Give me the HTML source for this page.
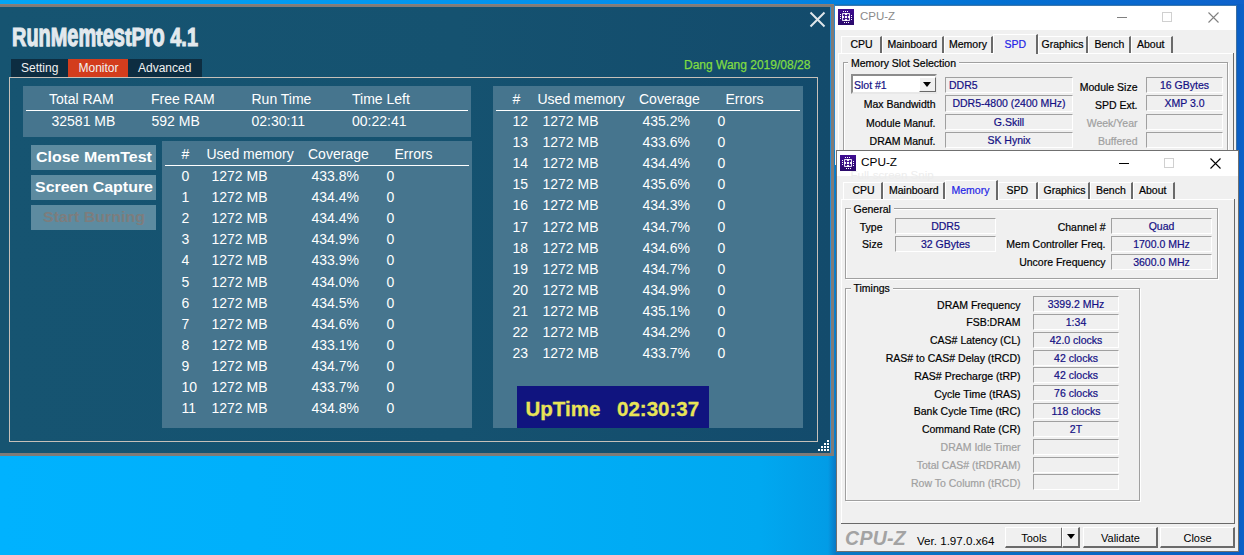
<!DOCTYPE html>
<html><head><meta charset="utf-8"><title>RunMemtestPro</title>
<style>
html,body{margin:0;padding:0;}
body{width:1244px;height:555px;overflow:hidden;position:relative;font-family:"Liberation Sans",sans-serif;
background:linear-gradient(to right,#00b2fe 0px,#00aef8 500px,#00a8f0 760px,#029ce6 828px,#0a78c4 836px,#0a5ec4 1238px,#0a62c8 1244px);}
.t{position:absolute;white-space:pre;}
.r{position:absolute;}
.cz{-webkit-text-stroke:0.2px currentColor;}
</style></head><body>
<div class="r" style="left:0px;top:0px;width:1244px;height:4px;background:linear-gradient(to right,#02a5f5 0px,#028cea 700px,#0370d2 1000px,#0e62cb 1244px);"></div>
<div class="r" style="left:0px;top:4px;width:834px;height:452px;background:#7f7b78;"></div>
<div class="r" style="left:0px;top:4px;width:834px;height:1px;background:#8a7f7a;"></div>
<div class="r" style="left:0px;top:7px;width:830px;height:446px;background:linear-gradient(to right,#165471 0%,#155270 55%,#134b6c 100%);"></div>
<div class="r" style="left:830px;top:7px;width:1px;height:446px;background:#1d8fe0;"></div>
<div class="t" style="left:12px;top:23.59px;font-size:26px;line-height:26px;color:#e3e9ee;font-weight:700;font-style:normal;transform:scaleX(0.766);transform-origin:0 0;-webkit-text-stroke:1.1px #e3e9ee;">R<span style="display:inline-block;transform:scaleY(1.18);transform-origin:0 22px">un</span>M<span style="display:inline-block;transform:scaleY(1.18);transform-origin:0 22px">em</span>t<span style="display:inline-block;transform:scaleY(1.18);transform-origin:0 22px">es</span>tP<span style="display:inline-block;transform:scaleY(1.18);transform-origin:0 22px">ro</span> 4.1</div>
<div class="r" style="left:11px;top:59px;width:191px;height:18px;background:#0d2d41;"></div>
<div class="r" style="left:68px;top:59px;width:60px;height:18px;background:#d33d1d;"></div>
<div class="t" style="left:21px;top:61.84px;font-size:12px;line-height:12px;color:#f2f2f2;font-weight:400;font-style:normal;">Setting</div>
<div class="t" style="left:78.5px;top:61.84px;font-size:12px;line-height:12px;color:#f2f2f2;font-weight:400;font-style:normal;">Monitor</div>
<div class="t" style="left:138px;top:61.84px;font-size:12px;line-height:12px;color:#f2f2f2;font-weight:400;font-style:normal;">Advanced</div>
<div class="t" style="left:684px;top:58.54px;font-size:12px;line-height:12px;color:#80dc42;font-weight:400;font-style:normal;-webkit-text-stroke:0.25px #80dc42;">Dang Wang 2019/08/28</div>
<svg class="r" style="left:808px;top:10px" width="19" height="19" viewBox="0 0 19 19"><path d="M2.5 2.5L16.5 16.5M16.5 2.5L2.5 16.5" stroke="#dfe5ea" stroke-width="2"/></svg>
<div class="r" style="left:9px;top:77px;width:809px;height:365px;background:transparent;box-sizing:border-box;border:1px solid #c6c0b9;"></div>
<div class="r" style="left:23px;top:86px;width:448px;height:51px;background:#46758e;"></div>
<div class="r" style="left:26px;top:110px;width:442px;height:1px;background:#ffffff;"></div>
<div class="t" style="left:49px;top:92.15px;font-size:14px;line-height:14px;color:#ffffff;font-weight:400;font-style:normal;">Total RAM</div>
<div class="t" style="left:151px;top:92.15px;font-size:14px;line-height:14px;color:#ffffff;font-weight:400;font-style:normal;">Free RAM</div>
<div class="t" style="left:251.5px;top:92.15px;font-size:14px;line-height:14px;color:#ffffff;font-weight:400;font-style:normal;">Run Time</div>
<div class="t" style="left:352px;top:92.15px;font-size:14px;line-height:14px;color:#ffffff;font-weight:400;font-style:normal;">Time Left</div>
<div class="t" style="left:51.5px;top:114.15px;font-size:14px;line-height:14px;color:#ffffff;font-weight:400;font-style:normal;">32581 MB</div>
<div class="t" style="left:151.5px;top:114.15px;font-size:14px;line-height:14px;color:#ffffff;font-weight:400;font-style:normal;">592 MB</div>
<div class="t" style="left:251.5px;top:114.15px;font-size:14px;line-height:14px;color:#ffffff;font-weight:400;font-style:normal;">02:30:11</div>
<div class="t" style="left:352px;top:114.15px;font-size:14px;line-height:14px;color:#ffffff;font-weight:400;font-style:normal;">00:22:41</div>
<div class="r" style="left:31px;top:145px;width:125px;height:25px;background:#5d8ba0;"></div>
<div class="t" style="left:14.0px;width:160px;text-align:center;top:150.15px;font-size:14px;line-height:14px;color:#ffffff;font-weight:700;font-style:normal;transform:scaleX(1.14);transform-origin:50% 0;">Close MemTest</div>
<div class="r" style="left:31px;top:175px;width:125px;height:25px;background:#5d8ba0;"></div>
<div class="t" style="left:14.0px;width:160px;text-align:center;top:180.15px;font-size:14px;line-height:14px;color:#ffffff;font-weight:700;font-style:normal;transform:scaleX(1.14);transform-origin:50% 0;">Screen Capture</div>
<div class="r" style="left:31px;top:205px;width:125px;height:25px;background:#5d8ba0;"></div>
<div class="t" style="left:14.0px;width:160px;text-align:center;top:210.15px;font-size:14px;line-height:14px;color:#7d7d7d;font-weight:700;font-style:normal;transform:scaleX(1.14);transform-origin:50% 0;">Start Burning</div>
<div class="r" style="left:162px;top:141px;width:310px;height:287px;background:#46758e;"></div>
<div class="r" style="left:165px;top:165px;width:304px;height:1px;background:#ffffff;"></div>
<div class="t" style="left:181.5px;top:147.15px;font-size:14px;line-height:14px;color:#ffffff;font-weight:400;font-style:normal;">#</div>
<div class="t" style="left:206.5px;top:147.15px;font-size:14px;line-height:14px;color:#ffffff;font-weight:400;font-style:normal;">Used memory</div>
<div class="t" style="left:308px;top:147.15px;font-size:14px;line-height:14px;color:#ffffff;font-weight:400;font-style:normal;">Coverage</div>
<div class="t" style="left:394.5px;top:147.15px;font-size:14px;line-height:14px;color:#ffffff;font-weight:400;font-style:normal;">Errors</div>
<div class="t" style="left:181.5px;top:169.15px;font-size:14px;line-height:14px;color:#ffffff;font-weight:400;font-style:normal;">0</div>
<div class="t" style="left:211.5px;top:169.15px;font-size:14px;line-height:14px;color:#ffffff;font-weight:400;font-style:normal;">1272 MB</div>
<div class="t" style="left:311.5px;top:169.15px;font-size:14px;line-height:14px;color:#ffffff;font-weight:400;font-style:normal;">433.8%</div>
<div class="t" style="left:386.5px;top:169.15px;font-size:14px;line-height:14px;color:#ffffff;font-weight:400;font-style:normal;">0</div>
<div class="t" style="left:181.5px;top:190.23px;font-size:14px;line-height:14px;color:#ffffff;font-weight:400;font-style:normal;">1</div>
<div class="t" style="left:211.5px;top:190.23px;font-size:14px;line-height:14px;color:#ffffff;font-weight:400;font-style:normal;">1272 MB</div>
<div class="t" style="left:311.5px;top:190.23px;font-size:14px;line-height:14px;color:#ffffff;font-weight:400;font-style:normal;">434.4%</div>
<div class="t" style="left:386.5px;top:190.23px;font-size:14px;line-height:14px;color:#ffffff;font-weight:400;font-style:normal;">0</div>
<div class="t" style="left:181.5px;top:211.31px;font-size:14px;line-height:14px;color:#ffffff;font-weight:400;font-style:normal;">2</div>
<div class="t" style="left:211.5px;top:211.31px;font-size:14px;line-height:14px;color:#ffffff;font-weight:400;font-style:normal;">1272 MB</div>
<div class="t" style="left:311.5px;top:211.31px;font-size:14px;line-height:14px;color:#ffffff;font-weight:400;font-style:normal;">434.4%</div>
<div class="t" style="left:386.5px;top:211.31px;font-size:14px;line-height:14px;color:#ffffff;font-weight:400;font-style:normal;">0</div>
<div class="t" style="left:181.5px;top:232.39px;font-size:14px;line-height:14px;color:#ffffff;font-weight:400;font-style:normal;">3</div>
<div class="t" style="left:211.5px;top:232.39px;font-size:14px;line-height:14px;color:#ffffff;font-weight:400;font-style:normal;">1272 MB</div>
<div class="t" style="left:311.5px;top:232.39px;font-size:14px;line-height:14px;color:#ffffff;font-weight:400;font-style:normal;">434.9%</div>
<div class="t" style="left:386.5px;top:232.39px;font-size:14px;line-height:14px;color:#ffffff;font-weight:400;font-style:normal;">0</div>
<div class="t" style="left:181.5px;top:253.47px;font-size:14px;line-height:14px;color:#ffffff;font-weight:400;font-style:normal;">4</div>
<div class="t" style="left:211.5px;top:253.47px;font-size:14px;line-height:14px;color:#ffffff;font-weight:400;font-style:normal;">1272 MB</div>
<div class="t" style="left:311.5px;top:253.47px;font-size:14px;line-height:14px;color:#ffffff;font-weight:400;font-style:normal;">433.9%</div>
<div class="t" style="left:386.5px;top:253.47px;font-size:14px;line-height:14px;color:#ffffff;font-weight:400;font-style:normal;">0</div>
<div class="t" style="left:181.5px;top:274.55px;font-size:14px;line-height:14px;color:#ffffff;font-weight:400;font-style:normal;">5</div>
<div class="t" style="left:211.5px;top:274.55px;font-size:14px;line-height:14px;color:#ffffff;font-weight:400;font-style:normal;">1272 MB</div>
<div class="t" style="left:311.5px;top:274.55px;font-size:14px;line-height:14px;color:#ffffff;font-weight:400;font-style:normal;">434.0%</div>
<div class="t" style="left:386.5px;top:274.55px;font-size:14px;line-height:14px;color:#ffffff;font-weight:400;font-style:normal;">0</div>
<div class="t" style="left:181.5px;top:295.63px;font-size:14px;line-height:14px;color:#ffffff;font-weight:400;font-style:normal;">6</div>
<div class="t" style="left:211.5px;top:295.63px;font-size:14px;line-height:14px;color:#ffffff;font-weight:400;font-style:normal;">1272 MB</div>
<div class="t" style="left:311.5px;top:295.63px;font-size:14px;line-height:14px;color:#ffffff;font-weight:400;font-style:normal;">434.5%</div>
<div class="t" style="left:386.5px;top:295.63px;font-size:14px;line-height:14px;color:#ffffff;font-weight:400;font-style:normal;">0</div>
<div class="t" style="left:181.5px;top:316.71px;font-size:14px;line-height:14px;color:#ffffff;font-weight:400;font-style:normal;">7</div>
<div class="t" style="left:211.5px;top:316.71px;font-size:14px;line-height:14px;color:#ffffff;font-weight:400;font-style:normal;">1272 MB</div>
<div class="t" style="left:311.5px;top:316.71px;font-size:14px;line-height:14px;color:#ffffff;font-weight:400;font-style:normal;">434.6%</div>
<div class="t" style="left:386.5px;top:316.71px;font-size:14px;line-height:14px;color:#ffffff;font-weight:400;font-style:normal;">0</div>
<div class="t" style="left:181.5px;top:337.79px;font-size:14px;line-height:14px;color:#ffffff;font-weight:400;font-style:normal;">8</div>
<div class="t" style="left:211.5px;top:337.79px;font-size:14px;line-height:14px;color:#ffffff;font-weight:400;font-style:normal;">1272 MB</div>
<div class="t" style="left:311.5px;top:337.79px;font-size:14px;line-height:14px;color:#ffffff;font-weight:400;font-style:normal;">433.1%</div>
<div class="t" style="left:386.5px;top:337.79px;font-size:14px;line-height:14px;color:#ffffff;font-weight:400;font-style:normal;">0</div>
<div class="t" style="left:181.5px;top:358.87px;font-size:14px;line-height:14px;color:#ffffff;font-weight:400;font-style:normal;">9</div>
<div class="t" style="left:211.5px;top:358.87px;font-size:14px;line-height:14px;color:#ffffff;font-weight:400;font-style:normal;">1272 MB</div>
<div class="t" style="left:311.5px;top:358.87px;font-size:14px;line-height:14px;color:#ffffff;font-weight:400;font-style:normal;">434.7%</div>
<div class="t" style="left:386.5px;top:358.87px;font-size:14px;line-height:14px;color:#ffffff;font-weight:400;font-style:normal;">0</div>
<div class="t" style="left:181.5px;top:379.95px;font-size:14px;line-height:14px;color:#ffffff;font-weight:400;font-style:normal;">10</div>
<div class="t" style="left:211.5px;top:379.95px;font-size:14px;line-height:14px;color:#ffffff;font-weight:400;font-style:normal;">1272 MB</div>
<div class="t" style="left:311.5px;top:379.95px;font-size:14px;line-height:14px;color:#ffffff;font-weight:400;font-style:normal;">433.7%</div>
<div class="t" style="left:386.5px;top:379.95px;font-size:14px;line-height:14px;color:#ffffff;font-weight:400;font-style:normal;">0</div>
<div class="t" style="left:181.5px;top:401.03px;font-size:14px;line-height:14px;color:#ffffff;font-weight:400;font-style:normal;">11</div>
<div class="t" style="left:211.5px;top:401.03px;font-size:14px;line-height:14px;color:#ffffff;font-weight:400;font-style:normal;">1272 MB</div>
<div class="t" style="left:311.5px;top:401.03px;font-size:14px;line-height:14px;color:#ffffff;font-weight:400;font-style:normal;">434.8%</div>
<div class="t" style="left:386.5px;top:401.03px;font-size:14px;line-height:14px;color:#ffffff;font-weight:400;font-style:normal;">0</div>
<div class="r" style="left:493px;top:86px;width:310px;height:342px;background:#46758e;"></div>
<div class="r" style="left:496px;top:110px;width:304px;height:1px;background:#ffffff;"></div>
<div class="t" style="left:512.5px;top:92.15px;font-size:14px;line-height:14px;color:#ffffff;font-weight:400;font-style:normal;">#</div>
<div class="t" style="left:537.5px;top:92.15px;font-size:14px;line-height:14px;color:#ffffff;font-weight:400;font-style:normal;">Used memory</div>
<div class="t" style="left:639px;top:92.15px;font-size:14px;line-height:14px;color:#ffffff;font-weight:400;font-style:normal;">Coverage</div>
<div class="t" style="left:725.5px;top:92.15px;font-size:14px;line-height:14px;color:#ffffff;font-weight:400;font-style:normal;">Errors</div>
<div class="t" style="left:512.5px;top:114.15px;font-size:14px;line-height:14px;color:#ffffff;font-weight:400;font-style:normal;">12</div>
<div class="t" style="left:542.5px;top:114.15px;font-size:14px;line-height:14px;color:#ffffff;font-weight:400;font-style:normal;">1272 MB</div>
<div class="t" style="left:642.5px;top:114.15px;font-size:14px;line-height:14px;color:#ffffff;font-weight:400;font-style:normal;">435.2%</div>
<div class="t" style="left:717.5px;top:114.15px;font-size:14px;line-height:14px;color:#ffffff;font-weight:400;font-style:normal;">0</div>
<div class="t" style="left:512.5px;top:135.23px;font-size:14px;line-height:14px;color:#ffffff;font-weight:400;font-style:normal;">13</div>
<div class="t" style="left:542.5px;top:135.23px;font-size:14px;line-height:14px;color:#ffffff;font-weight:400;font-style:normal;">1272 MB</div>
<div class="t" style="left:642.5px;top:135.23px;font-size:14px;line-height:14px;color:#ffffff;font-weight:400;font-style:normal;">433.6%</div>
<div class="t" style="left:717.5px;top:135.23px;font-size:14px;line-height:14px;color:#ffffff;font-weight:400;font-style:normal;">0</div>
<div class="t" style="left:512.5px;top:156.31px;font-size:14px;line-height:14px;color:#ffffff;font-weight:400;font-style:normal;">14</div>
<div class="t" style="left:542.5px;top:156.31px;font-size:14px;line-height:14px;color:#ffffff;font-weight:400;font-style:normal;">1272 MB</div>
<div class="t" style="left:642.5px;top:156.31px;font-size:14px;line-height:14px;color:#ffffff;font-weight:400;font-style:normal;">434.4%</div>
<div class="t" style="left:717.5px;top:156.31px;font-size:14px;line-height:14px;color:#ffffff;font-weight:400;font-style:normal;">0</div>
<div class="t" style="left:512.5px;top:177.39px;font-size:14px;line-height:14px;color:#ffffff;font-weight:400;font-style:normal;">15</div>
<div class="t" style="left:542.5px;top:177.39px;font-size:14px;line-height:14px;color:#ffffff;font-weight:400;font-style:normal;">1272 MB</div>
<div class="t" style="left:642.5px;top:177.39px;font-size:14px;line-height:14px;color:#ffffff;font-weight:400;font-style:normal;">435.6%</div>
<div class="t" style="left:717.5px;top:177.39px;font-size:14px;line-height:14px;color:#ffffff;font-weight:400;font-style:normal;">0</div>
<div class="t" style="left:512.5px;top:198.47px;font-size:14px;line-height:14px;color:#ffffff;font-weight:400;font-style:normal;">16</div>
<div class="t" style="left:542.5px;top:198.47px;font-size:14px;line-height:14px;color:#ffffff;font-weight:400;font-style:normal;">1272 MB</div>
<div class="t" style="left:642.5px;top:198.47px;font-size:14px;line-height:14px;color:#ffffff;font-weight:400;font-style:normal;">434.3%</div>
<div class="t" style="left:717.5px;top:198.47px;font-size:14px;line-height:14px;color:#ffffff;font-weight:400;font-style:normal;">0</div>
<div class="t" style="left:512.5px;top:219.55px;font-size:14px;line-height:14px;color:#ffffff;font-weight:400;font-style:normal;">17</div>
<div class="t" style="left:542.5px;top:219.55px;font-size:14px;line-height:14px;color:#ffffff;font-weight:400;font-style:normal;">1272 MB</div>
<div class="t" style="left:642.5px;top:219.55px;font-size:14px;line-height:14px;color:#ffffff;font-weight:400;font-style:normal;">434.7%</div>
<div class="t" style="left:717.5px;top:219.55px;font-size:14px;line-height:14px;color:#ffffff;font-weight:400;font-style:normal;">0</div>
<div class="t" style="left:512.5px;top:240.63px;font-size:14px;line-height:14px;color:#ffffff;font-weight:400;font-style:normal;">18</div>
<div class="t" style="left:542.5px;top:240.63px;font-size:14px;line-height:14px;color:#ffffff;font-weight:400;font-style:normal;">1272 MB</div>
<div class="t" style="left:642.5px;top:240.63px;font-size:14px;line-height:14px;color:#ffffff;font-weight:400;font-style:normal;">434.6%</div>
<div class="t" style="left:717.5px;top:240.63px;font-size:14px;line-height:14px;color:#ffffff;font-weight:400;font-style:normal;">0</div>
<div class="t" style="left:512.5px;top:261.71px;font-size:14px;line-height:14px;color:#ffffff;font-weight:400;font-style:normal;">19</div>
<div class="t" style="left:542.5px;top:261.71px;font-size:14px;line-height:14px;color:#ffffff;font-weight:400;font-style:normal;">1272 MB</div>
<div class="t" style="left:642.5px;top:261.71px;font-size:14px;line-height:14px;color:#ffffff;font-weight:400;font-style:normal;">434.7%</div>
<div class="t" style="left:717.5px;top:261.71px;font-size:14px;line-height:14px;color:#ffffff;font-weight:400;font-style:normal;">0</div>
<div class="t" style="left:512.5px;top:282.79px;font-size:14px;line-height:14px;color:#ffffff;font-weight:400;font-style:normal;">20</div>
<div class="t" style="left:542.5px;top:282.79px;font-size:14px;line-height:14px;color:#ffffff;font-weight:400;font-style:normal;">1272 MB</div>
<div class="t" style="left:642.5px;top:282.79px;font-size:14px;line-height:14px;color:#ffffff;font-weight:400;font-style:normal;">434.9%</div>
<div class="t" style="left:717.5px;top:282.79px;font-size:14px;line-height:14px;color:#ffffff;font-weight:400;font-style:normal;">0</div>
<div class="t" style="left:512.5px;top:303.87px;font-size:14px;line-height:14px;color:#ffffff;font-weight:400;font-style:normal;">21</div>
<div class="t" style="left:542.5px;top:303.87px;font-size:14px;line-height:14px;color:#ffffff;font-weight:400;font-style:normal;">1272 MB</div>
<div class="t" style="left:642.5px;top:303.87px;font-size:14px;line-height:14px;color:#ffffff;font-weight:400;font-style:normal;">435.1%</div>
<div class="t" style="left:717.5px;top:303.87px;font-size:14px;line-height:14px;color:#ffffff;font-weight:400;font-style:normal;">0</div>
<div class="t" style="left:512.5px;top:324.95px;font-size:14px;line-height:14px;color:#ffffff;font-weight:400;font-style:normal;">22</div>
<div class="t" style="left:542.5px;top:324.95px;font-size:14px;line-height:14px;color:#ffffff;font-weight:400;font-style:normal;">1272 MB</div>
<div class="t" style="left:642.5px;top:324.95px;font-size:14px;line-height:14px;color:#ffffff;font-weight:400;font-style:normal;">434.2%</div>
<div class="t" style="left:717.5px;top:324.95px;font-size:14px;line-height:14px;color:#ffffff;font-weight:400;font-style:normal;">0</div>
<div class="t" style="left:512.5px;top:346.03px;font-size:14px;line-height:14px;color:#ffffff;font-weight:400;font-style:normal;">23</div>
<div class="t" style="left:542.5px;top:346.03px;font-size:14px;line-height:14px;color:#ffffff;font-weight:400;font-style:normal;">1272 MB</div>
<div class="t" style="left:642.5px;top:346.03px;font-size:14px;line-height:14px;color:#ffffff;font-weight:400;font-style:normal;">433.7%</div>
<div class="t" style="left:717.5px;top:346.03px;font-size:14px;line-height:14px;color:#ffffff;font-weight:400;font-style:normal;">0</div>
<div class="r" style="left:517px;top:386px;width:192px;height:42px;background:#10147f;"></div>
<div class="t" style="left:525.5px;top:398.65px;font-size:20.5px;line-height:20.5px;color:#e8e457;font-weight:700;font-style:normal;-webkit-text-stroke:0.3px #e8e457;">UpTime</div>
<div class="t" style="left:617px;top:398.65px;font-size:20.5px;line-height:20.5px;color:#e8e457;font-weight:700;font-style:normal;-webkit-text-stroke:0.3px #e8e457;">02:30:37</div>
<div class="r" style="left:827px;top:440px;width:2px;height:2px;background:#ffffff;"></div>
<div class="r" style="left:824px;top:443px;width:2px;height:2px;background:#ffffff;"></div>
<div class="r" style="left:827px;top:443px;width:2px;height:2px;background:#ffffff;"></div>
<div class="r" style="left:821px;top:446px;width:2px;height:2px;background:#ffffff;"></div>
<div class="r" style="left:824px;top:446px;width:2px;height:2px;background:#ffffff;"></div>
<div class="r" style="left:827px;top:446px;width:2px;height:2px;background:#ffffff;"></div>
<div class="r" style="left:818px;top:449px;width:2px;height:2px;background:#ffffff;"></div>
<div class="r" style="left:821px;top:449px;width:2px;height:2px;background:#ffffff;"></div>
<div class="r" style="left:824px;top:449px;width:2px;height:2px;background:#ffffff;"></div>
<div class="r" style="left:827px;top:449px;width:2px;height:2px;background:#ffffff;"></div>
<div class="r" style="left:834px;top:5px;width:1px;height:145px;background:#2a88d0;"></div>
<div class="r" style="left:835px;top:5px;width:402px;height:160px;background:#f0f0f0;box-sizing:border-box;border-top:1px solid #3b78b0;border-right:1px solid #3b6ea0;"></div>
<div class="r" style="left:835px;top:6px;width:401px;height:24px;background:#ffffff;"></div>
<svg class="r" style="left:838px;top:9px" width="16" height="16" viewBox="0 0 16 16"><defs><linearGradient id="iga" x1="0" y1="0" x2="0" y2="1"><stop offset="0" stop-color="#3f0d92"/><stop offset="1" stop-color="#2a0a6a"/></linearGradient></defs><rect width="16" height="16" fill="url(#iga)"/><g fill="#fff"><rect x="5" y="2" width="1" height="1"/><rect x="7" y="2" width="1" height="1"/><rect x="9" y="2" width="1" height="1"/><rect x="6" y="13" width="1" height="1"/><rect x="8" y="13" width="1" height="1"/><rect x="10" y="13" width="1" height="1"/><rect x="2" y="5" width="1" height="1"/><rect x="2" y="7" width="1" height="1"/><rect x="2" y="9" width="1" height="1"/><rect x="13" y="6" width="1" height="1"/><rect x="13" y="8" width="1" height="1"/><rect x="13" y="10" width="1" height="1"/><rect x="4" y="4" width="8" height="8" rx="1"/></g><path d="M5.2 5.2L10.8 10.8M10.8 5.2L5.2 10.8" stroke="#3a0c88" stroke-width="2.3"/><rect x="7" y="7" width="2" height="2" fill="#fff"/><rect x="5" y="7.5" width="1" height="1" fill="#fff"/><rect x="10" y="7.5" width="1" height="1" fill="#fff"/><rect x="7.5" y="5" width="1" height="1" fill="#fff"/><rect x="7.5" y="10" width="1" height="1" fill="#fff"/></svg>
<div class="t" style="left:860px;top:11.07px;font-size:11.5px;line-height:11.5px;color:#8a8a8a;font-weight:400;font-style:normal;">CPU-Z</div>
<div class="r" style="left:1117px;top:17px;width:10px;height:1px;background:#808080;"></div>
<div class="r" style="left:1162px;top:12px;width:10px;height:10px;background:transparent;box-sizing:border-box;border:1px solid #d0d0d0;"></div>
<svg class="r" style="left:1208px;top:12px" width="11" height="11" viewBox="0 0 11 11"><path d="M0.5 0.5L10.5 10.5M10.5 0.5L0.5 10.5" stroke="#808080" stroke-width="1.1"/></svg>
<div class="r" style="left:838px;top:53px;width:396px;height:140px;background:#f0f0f0;box-sizing:border-box;border-top:1px solid #fff;border-left:1px solid #fff;border-right:1px solid #a0a0a0;"></div>
<div class="r" style="left:1233px;top:53px;width:1px;height:100px;background:#696969;"></div>
<div class="r" style="left:841px;top:36px;width:41px;height:17px;background:#f0f0f0;box-sizing:border-box;border-top:1px solid #fff;border-left:1px solid #fff;border-right:2px solid #6a6a6a;"></div>
<div class="t cz" style="left:850.5px;top:39.11px;font-size:10.5px;line-height:10.5px;color:#000;font-weight:400;font-style:normal;">CPU</div>
<div class="r" style="left:882px;top:36px;width:62px;height:17px;background:#f0f0f0;box-sizing:border-box;border-top:1px solid #fff;border-left:1px solid #fff;border-right:2px solid #6a6a6a;"></div>
<div class="t cz" style="left:887.5px;top:39.11px;font-size:10.5px;line-height:10.5px;color:#000;font-weight:400;font-style:normal;">Mainboard</div>
<div class="r" style="left:944px;top:36px;width:49px;height:17px;background:#f0f0f0;box-sizing:border-box;border-top:1px solid #fff;border-left:1px solid #fff;border-right:2px solid #6a6a6a;"></div>
<div class="t cz" style="left:949px;top:39.11px;font-size:10.5px;line-height:10.5px;color:#000;font-weight:400;font-style:normal;">Memory</div>
<div class="r" style="left:1038px;top:36px;width:50px;height:17px;background:#f0f0f0;box-sizing:border-box;border-top:1px solid #fff;border-left:1px solid #fff;border-right:2px solid #6a6a6a;"></div>
<div class="t cz" style="left:1041.5px;top:39.11px;font-size:10.5px;line-height:10.5px;color:#000;font-weight:400;font-style:normal;">Graphics</div>
<div class="r" style="left:1088px;top:36px;width:43px;height:17px;background:#f0f0f0;box-sizing:border-box;border-top:1px solid #fff;border-left:1px solid #fff;border-right:2px solid #6a6a6a;"></div>
<div class="t cz" style="left:1094.5px;top:39.11px;font-size:10.5px;line-height:10.5px;color:#000;font-weight:400;font-style:normal;">Bench</div>
<div class="r" style="left:1131px;top:36px;width:42px;height:17px;background:#f0f0f0;box-sizing:border-box;border-top:1px solid #fff;border-left:1px solid #fff;border-right:2px solid #6a6a6a;"></div>
<div class="t cz" style="left:1137px;top:39.11px;font-size:10.5px;line-height:10.5px;color:#000;font-weight:400;font-style:normal;">About</div>
<div class="r" style="left:993px;top:34px;width:45px;height:20px;background:#f0f0f0;box-sizing:border-box;border-top:1px solid #fff;border-left:1px solid #fff;border-right:2px solid #6a6a6a;"></div>
<div class="t cz" style="left:1004.5px;top:38.61px;font-size:10.5px;line-height:10.5px;color:#2424e6;font-weight:400;font-style:normal;">SPD</div>
<div class="r" style="left:843px;top:62px;width:385px;height:100px;background:transparent;box-sizing:border-box;border:1px solid #a0a0a0;box-shadow:inset 1px 1px 0 #fff, 1px 1px 0 #fff;"></div>
<div class="r" style="left:848px;top:61px;width:111px;height:3px;background:#f0f0f0;"></div>
<div class="t cz" style="left:851px;top:57.71px;font-size:10.5px;line-height:10.5px;color:#000;font-weight:400;font-style:normal;">Memory Slot Selection</div>
<div class="r" style="left:851px;top:74px;width:86px;height:20px;background:#ffffff;box-sizing:border-box;border-top:2px solid #8c8c8c;border-left:2px solid #8c8c8c;border-bottom:2px solid #e8e8e8;border-right:2px solid #e8e8e8;"></div>
<div class="r" style="left:919px;top:77px;width:17px;height:15px;background:#f0f0f0;box-sizing:border-box;border-top:1px solid #fff;border-left:1px solid #fff;border-bottom:1px solid #696969;border-right:1px solid #696969;"></div>
<svg class="r" style="left:922px;top:82px" width="10" height="6" viewBox="0 0 10 6"><path d="M1 0H9L5 5Z" fill="#000"/></svg>
<div class="t cz" style="left:854px;top:80.11px;font-size:10.5px;line-height:10.5px;color:#130f84;font-weight:400;font-style:normal;">Slot #1</div>
<div class="r" style="left:945px;top:77px;width:128px;height:16px;background:#f0f0f0;box-sizing:border-box;border-top:1px solid #a0a0a0;border-left:1px solid #a0a0a0;border-bottom:1px solid #ffffff;border-right:1px solid #ffffff;"></div>
<div class="t cz" style="left:949px;top:80.41px;font-size:10.5px;line-height:10.5px;color:#130f84;font-weight:400;font-style:normal;">DDR5</div>
<div class="r" style="left:945px;top:95px;width:128px;height:17px;background:#f0f0f0;box-sizing:border-box;border-top:1px solid #a0a0a0;border-left:1px solid #a0a0a0;border-bottom:1px solid #ffffff;border-right:1px solid #ffffff;"></div>
<div class="t cz" style="left:945.0px;width:128px;text-align:center;top:98.41px;font-size:10.5px;line-height:10.5px;color:#130f84;font-weight:400;font-style:normal;">DDR5-4800 (2400 MHz)</div>
<div class="r" style="left:945px;top:114px;width:128px;height:16px;background:#f0f0f0;box-sizing:border-box;border-top:1px solid #a0a0a0;border-left:1px solid #a0a0a0;border-bottom:1px solid #ffffff;border-right:1px solid #ffffff;"></div>
<div class="t cz" style="left:945.0px;width:128px;text-align:center;top:117.41px;font-size:10.5px;line-height:10.5px;color:#130f84;font-weight:400;font-style:normal;">G.Skill</div>
<div class="r" style="left:945px;top:132px;width:128px;height:16px;background:#f0f0f0;box-sizing:border-box;border-top:1px solid #a0a0a0;border-left:1px solid #a0a0a0;border-bottom:1px solid #ffffff;border-right:1px solid #ffffff;"></div>
<div class="t cz" style="left:945.0px;width:128px;text-align:center;top:135.41px;font-size:10.5px;line-height:10.5px;color:#130f84;font-weight:400;font-style:normal;">SK Hynix</div>
<div class="t cz" style="left:815.5px;width:120px;text-align:right;top:99.41px;font-size:10.5px;line-height:10.5px;color:#000;font-weight:400;font-style:normal;">Max Bandwidth</div>
<div class="t cz" style="left:815.5px;width:120px;text-align:right;top:117.71px;font-size:10.5px;line-height:10.5px;color:#000;font-weight:400;font-style:normal;">Module Manuf.</div>
<div class="t cz" style="left:815.5px;width:120px;text-align:right;top:135.61px;font-size:10.5px;line-height:10.5px;color:#000;font-weight:400;font-style:normal;">DRAM Manuf.</div>
<div class="t cz" style="left:1037.5px;width:100px;text-align:right;top:81.71px;font-size:10.5px;line-height:10.5px;color:#000;font-weight:400;font-style:normal;">Module Size</div>
<div class="r" style="left:1146px;top:77px;width:77px;height:16px;background:#f0f0f0;box-sizing:border-box;border-top:1px solid #a0a0a0;border-left:1px solid #a0a0a0;border-bottom:1px solid #ffffff;border-right:1px solid #ffffff;"></div>
<div class="t cz" style="left:1146.0px;width:77px;text-align:center;top:80.41px;font-size:10.5px;line-height:10.5px;color:#130f84;font-weight:400;font-style:normal;">16 GBytes</div>
<div class="t cz" style="left:1037.5px;width:100px;text-align:right;top:99.71px;font-size:10.5px;line-height:10.5px;color:#000;font-weight:400;font-style:normal;">SPD Ext.</div>
<div class="r" style="left:1146px;top:95px;width:77px;height:16px;background:#f0f0f0;box-sizing:border-box;border-top:1px solid #a0a0a0;border-left:1px solid #a0a0a0;border-bottom:1px solid #ffffff;border-right:1px solid #ffffff;"></div>
<div class="t cz" style="left:1146.0px;width:77px;text-align:center;top:98.41px;font-size:10.5px;line-height:10.5px;color:#130f84;font-weight:400;font-style:normal;">XMP 3.0</div>
<div class="t cz" style="left:1037.5px;width:100px;text-align:right;top:118.11px;font-size:10.5px;line-height:10.5px;color:#a0a0a0;font-weight:400;font-style:normal;">Week/Year</div>
<div class="r" style="left:1146px;top:114px;width:77px;height:16px;background:#f0f0f0;box-sizing:border-box;border-top:1px solid #a0a0a0;border-left:1px solid #a0a0a0;border-bottom:1px solid #ffffff;border-right:1px solid #ffffff;"></div>
<div class="t cz" style="left:1037.5px;width:100px;text-align:right;top:135.91px;font-size:10.5px;line-height:10.5px;color:#a0a0a0;font-weight:400;font-style:normal;">Buffered</div>
<div class="r" style="left:1146px;top:132px;width:77px;height:16px;background:#f0f0f0;box-sizing:border-box;border-top:1px solid #a0a0a0;border-left:1px solid #a0a0a0;border-bottom:1px solid #ffffff;border-right:1px solid #ffffff;"></div>
<div class="r" style="left:836px;top:150px;width:403px;height:402px;background:#f0f0f0;box-sizing:border-box;border:1px solid #707070;"></div>
<div class="r" style="left:837px;top:151px;width:401px;height:25px;background:#ffffff;"></div>
<svg class="r" style="left:840px;top:155px" width="16" height="16" viewBox="0 0 16 16"><defs><linearGradient id="igb" x1="0" y1="0" x2="0" y2="1"><stop offset="0" stop-color="#3f0d92"/><stop offset="1" stop-color="#2a0a6a"/></linearGradient></defs><rect width="16" height="16" fill="url(#igb)"/><g fill="#fff"><rect x="5" y="2" width="1" height="1"/><rect x="7" y="2" width="1" height="1"/><rect x="9" y="2" width="1" height="1"/><rect x="6" y="13" width="1" height="1"/><rect x="8" y="13" width="1" height="1"/><rect x="10" y="13" width="1" height="1"/><rect x="2" y="5" width="1" height="1"/><rect x="2" y="7" width="1" height="1"/><rect x="2" y="9" width="1" height="1"/><rect x="13" y="6" width="1" height="1"/><rect x="13" y="8" width="1" height="1"/><rect x="13" y="10" width="1" height="1"/><rect x="4" y="4" width="8" height="8" rx="1"/></g><path d="M5.2 5.2L10.8 10.8M10.8 5.2L5.2 10.8" stroke="#3a0c88" stroke-width="2.3"/><rect x="7" y="7" width="2" height="2" fill="#fff"/><rect x="5" y="7.5" width="1" height="1" fill="#fff"/><rect x="10" y="7.5" width="1" height="1" fill="#fff"/><rect x="7.5" y="5" width="1" height="1" fill="#fff"/><rect x="7.5" y="10" width="1" height="1" fill="#fff"/></svg>
<div class="t" style="left:861px;top:157.01px;font-size:11.8px;line-height:11.8px;color:#000;font-weight:400;font-style:normal;">CPU-Z</div>
<div class="t" style="left:850.5px;top:169.77px;font-size:11.5px;line-height:11.5px;color:#ededed;font-weight:400;font-style:normal;">Full-screen Snip</div>
<div class="r" style="left:1119px;top:163px;width:10px;height:1px;background:#000;"></div>
<div class="r" style="left:1164px;top:158px;width:10px;height:10px;background:transparent;box-sizing:border-box;border:1px solid #d0d0d0;"></div>
<svg class="r" style="left:1210px;top:158px" width="11" height="11" viewBox="0 0 11 11"><path d="M0.5 0.5L10.5 10.5M10.5 0.5L0.5 10.5" stroke="#000" stroke-width="1.1"/></svg>
<div class="r" style="left:841px;top:199px;width:394px;height:325px;background:#f0f0f0;box-sizing:border-box;border-top:1px solid #fff;border-left:1px solid #fff;border-right:1px solid #a0a0a0;border-bottom:1px solid #a0a0a0;"></div>
<div class="r" style="left:1234px;top:199px;width:1px;height:325px;background:#696969;"></div>
<div class="r" style="left:841px;top:523px;width:394px;height:1px;background:#696969;"></div>
<div class="r" style="left:843px;top:182px;width:40px;height:17px;background:#f0f0f0;box-sizing:border-box;border-top:1px solid #fff;border-left:1px solid #fff;border-right:2px solid #6a6a6a;"></div>
<div class="t cz" style="left:852.5px;top:185.11px;font-size:10.5px;line-height:10.5px;color:#000;font-weight:400;font-style:normal;">CPU</div>
<div class="r" style="left:883px;top:182px;width:62px;height:17px;background:#f0f0f0;box-sizing:border-box;border-top:1px solid #fff;border-left:1px solid #fff;border-right:2px solid #6a6a6a;"></div>
<div class="t cz" style="left:889px;top:185.11px;font-size:10.5px;line-height:10.5px;color:#000;font-weight:400;font-style:normal;">Mainboard</div>
<div class="r" style="left:998px;top:182px;width:40px;height:17px;background:#f0f0f0;box-sizing:border-box;border-top:1px solid #fff;border-left:1px solid #fff;border-right:2px solid #6a6a6a;"></div>
<div class="t cz" style="left:1006.5px;top:185.11px;font-size:10.5px;line-height:10.5px;color:#000;font-weight:400;font-style:normal;">SPD</div>
<div class="r" style="left:1038px;top:182px;width:52px;height:17px;background:#f0f0f0;box-sizing:border-box;border-top:1px solid #fff;border-left:1px solid #fff;border-right:2px solid #6a6a6a;"></div>
<div class="t cz" style="left:1043.5px;top:185.11px;font-size:10.5px;line-height:10.5px;color:#000;font-weight:400;font-style:normal;">Graphics</div>
<div class="r" style="left:1090px;top:182px;width:43px;height:17px;background:#f0f0f0;box-sizing:border-box;border-top:1px solid #fff;border-left:1px solid #fff;border-right:2px solid #6a6a6a;"></div>
<div class="t cz" style="left:1096px;top:185.11px;font-size:10.5px;line-height:10.5px;color:#000;font-weight:400;font-style:normal;">Bench</div>
<div class="r" style="left:1133px;top:182px;width:42px;height:17px;background:#f0f0f0;box-sizing:border-box;border-top:1px solid #fff;border-left:1px solid #fff;border-right:2px solid #6a6a6a;"></div>
<div class="t cz" style="left:1139px;top:185.11px;font-size:10.5px;line-height:10.5px;color:#000;font-weight:400;font-style:normal;">About</div>
<div class="r" style="left:945px;top:180px;width:53px;height:20px;background:#f0f0f0;box-sizing:border-box;border-top:1px solid #fff;border-left:1px solid #fff;border-right:2px solid #6a6a6a;"></div>
<div class="t cz" style="left:951.5px;top:184.61px;font-size:10.5px;line-height:10.5px;color:#2424e6;font-weight:400;font-style:normal;">Memory</div>
<div class="r" style="left:845px;top:208px;width:373px;height:71px;background:transparent;box-sizing:border-box;border:1px solid #a0a0a0;box-shadow:inset 1px 1px 0 #fff, 1px 1px 0 #fff;"></div>
<div class="r" style="left:850.5px;top:207px;width:43px;height:3px;background:#f0f0f0;"></div>
<div class="t cz" style="left:853.5px;top:204.01px;font-size:10.5px;line-height:10.5px;color:#000;font-weight:400;font-style:normal;">General</div>
<div class="t cz" style="left:822.5px;width:60px;text-align:right;top:221.61px;font-size:10.5px;line-height:10.5px;color:#000;font-weight:400;font-style:normal;">Type</div>
<div class="t cz" style="left:822.5px;width:60px;text-align:right;top:239.41px;font-size:10.5px;line-height:10.5px;color:#000;font-weight:400;font-style:normal;">Size</div>
<div class="r" style="left:895px;top:218px;width:101px;height:16px;background:#f0f0f0;box-sizing:border-box;border-top:1px solid #a0a0a0;border-left:1px solid #a0a0a0;border-bottom:1px solid #ffffff;border-right:1px solid #ffffff;"></div>
<div class="t cz" style="left:895.0px;width:101px;text-align:center;top:221.41px;font-size:10.5px;line-height:10.5px;color:#130f84;font-weight:400;font-style:normal;">DDR5</div>
<div class="r" style="left:895px;top:236px;width:101px;height:16px;background:#f0f0f0;box-sizing:border-box;border-top:1px solid #a0a0a0;border-left:1px solid #a0a0a0;border-bottom:1px solid #ffffff;border-right:1px solid #ffffff;"></div>
<div class="t cz" style="left:895.0px;width:101px;text-align:center;top:239.41px;font-size:10.5px;line-height:10.5px;color:#130f84;font-weight:400;font-style:normal;">32 GBytes</div>
<div class="t cz" style="left:965.5px;width:140px;text-align:right;top:222.11px;font-size:10.5px;line-height:10.5px;color:#000;font-weight:400;font-style:normal;">Channel #</div>
<div class="r" style="left:1111px;top:218px;width:101px;height:16px;background:#f0f0f0;box-sizing:border-box;border-top:1px solid #a0a0a0;border-left:1px solid #a0a0a0;border-bottom:1px solid #ffffff;border-right:1px solid #ffffff;"></div>
<div class="t cz" style="left:1111.0px;width:101px;text-align:center;top:221.41px;font-size:10.5px;line-height:10.5px;color:#130f84;font-weight:400;font-style:normal;">Quad</div>
<div class="t cz" style="left:965.5px;width:140px;text-align:right;top:238.71px;font-size:10.5px;line-height:10.5px;color:#000;font-weight:400;font-style:normal;">Mem Controller Freq.</div>
<div class="r" style="left:1111px;top:236px;width:101px;height:16px;background:#f0f0f0;box-sizing:border-box;border-top:1px solid #a0a0a0;border-left:1px solid #a0a0a0;border-bottom:1px solid #ffffff;border-right:1px solid #ffffff;"></div>
<div class="t cz" style="left:1111.0px;width:101px;text-align:center;top:239.41px;font-size:10.5px;line-height:10.5px;color:#130f84;font-weight:400;font-style:normal;">1700.0 MHz</div>
<div class="t cz" style="left:965.5px;width:140px;text-align:right;top:256.51px;font-size:10.5px;line-height:10.5px;color:#000;font-weight:400;font-style:normal;">Uncore Frequency</div>
<div class="r" style="left:1111px;top:254px;width:101px;height:16px;background:#f0f0f0;box-sizing:border-box;border-top:1px solid #a0a0a0;border-left:1px solid #a0a0a0;border-bottom:1px solid #ffffff;border-right:1px solid #ffffff;"></div>
<div class="t cz" style="left:1111.0px;width:101px;text-align:center;top:257.41px;font-size:10.5px;line-height:10.5px;color:#130f84;font-weight:400;font-style:normal;">3600.0 MHz</div>
<div class="r" style="left:845px;top:288px;width:295px;height:213px;background:transparent;box-sizing:border-box;border:1px solid #a0a0a0;box-shadow:inset 1px 1px 0 #fff, 1px 1px 0 #fff;"></div>
<div class="r" style="left:850.5px;top:287px;width:42px;height:3px;background:#f0f0f0;"></div>
<div class="t cz" style="left:853.5px;top:282.61px;font-size:10.5px;line-height:10.5px;color:#000;font-weight:400;font-style:normal;">Timings</div>
<div class="t cz" style="left:840.5px;width:180px;text-align:right;top:299.61px;font-size:10.5px;line-height:10.5px;color:#000;font-weight:400;font-style:normal;">DRAM Frequency</div>
<div class="r" style="left:1033px;top:296px;width:86px;height:16px;background:#f0f0f0;box-sizing:border-box;border-top:1px solid #a0a0a0;border-left:1px solid #a0a0a0;border-bottom:1px solid #ffffff;border-right:1px solid #ffffff;"></div>
<div class="t cz" style="left:1033.0px;width:86px;text-align:center;top:299.41px;font-size:10.5px;line-height:10.5px;color:#130f84;font-weight:400;font-style:normal;">3399.2 MHz</div>
<div class="t cz" style="left:840.5px;width:180px;text-align:right;top:317.41px;font-size:10.5px;line-height:10.5px;color:#000;font-weight:400;font-style:normal;">FSB:DRAM</div>
<div class="r" style="left:1033px;top:314px;width:86px;height:16px;background:#f0f0f0;box-sizing:border-box;border-top:1px solid #a0a0a0;border-left:1px solid #a0a0a0;border-bottom:1px solid #ffffff;border-right:1px solid #ffffff;"></div>
<div class="t cz" style="left:1033.0px;width:86px;text-align:center;top:317.41px;font-size:10.5px;line-height:10.5px;color:#130f84;font-weight:400;font-style:normal;">1:34</div>
<div class="t cz" style="left:840.5px;width:180px;text-align:right;top:335.21px;font-size:10.5px;line-height:10.5px;color:#000;font-weight:400;font-style:normal;">CAS# Latency (CL)</div>
<div class="r" style="left:1033px;top:332px;width:86px;height:16px;background:#f0f0f0;box-sizing:border-box;border-top:1px solid #a0a0a0;border-left:1px solid #a0a0a0;border-bottom:1px solid #ffffff;border-right:1px solid #ffffff;"></div>
<div class="t cz" style="left:1033.0px;width:86px;text-align:center;top:335.41px;font-size:10.5px;line-height:10.5px;color:#130f84;font-weight:400;font-style:normal;">42.0 clocks</div>
<div class="t cz" style="left:840.5px;width:180px;text-align:right;top:353.01px;font-size:10.5px;line-height:10.5px;color:#000;font-weight:400;font-style:normal;">RAS# to CAS# Delay (tRCD)</div>
<div class="r" style="left:1033px;top:350px;width:86px;height:16px;background:#f0f0f0;box-sizing:border-box;border-top:1px solid #a0a0a0;border-left:1px solid #a0a0a0;border-bottom:1px solid #ffffff;border-right:1px solid #ffffff;"></div>
<div class="t cz" style="left:1033.0px;width:86px;text-align:center;top:353.41px;font-size:10.5px;line-height:10.5px;color:#130f84;font-weight:400;font-style:normal;">42 clocks</div>
<div class="t cz" style="left:840.5px;width:180px;text-align:right;top:370.81px;font-size:10.5px;line-height:10.5px;color:#000;font-weight:400;font-style:normal;">RAS# Precharge (tRP)</div>
<div class="r" style="left:1033px;top:367px;width:86px;height:16px;background:#f0f0f0;box-sizing:border-box;border-top:1px solid #a0a0a0;border-left:1px solid #a0a0a0;border-bottom:1px solid #ffffff;border-right:1px solid #ffffff;"></div>
<div class="t cz" style="left:1033.0px;width:86px;text-align:center;top:370.41px;font-size:10.5px;line-height:10.5px;color:#130f84;font-weight:400;font-style:normal;">42 clocks</div>
<div class="t cz" style="left:840.5px;width:180px;text-align:right;top:388.61px;font-size:10.5px;line-height:10.5px;color:#000;font-weight:400;font-style:normal;">Cycle Time (tRAS)</div>
<div class="r" style="left:1033px;top:385px;width:86px;height:16px;background:#f0f0f0;box-sizing:border-box;border-top:1px solid #a0a0a0;border-left:1px solid #a0a0a0;border-bottom:1px solid #ffffff;border-right:1px solid #ffffff;"></div>
<div class="t cz" style="left:1033.0px;width:86px;text-align:center;top:388.41px;font-size:10.5px;line-height:10.5px;color:#130f84;font-weight:400;font-style:normal;">76 clocks</div>
<div class="t cz" style="left:840.5px;width:180px;text-align:right;top:406.41px;font-size:10.5px;line-height:10.5px;color:#000;font-weight:400;font-style:normal;">Bank Cycle Time (tRC)</div>
<div class="r" style="left:1033px;top:403px;width:86px;height:16px;background:#f0f0f0;box-sizing:border-box;border-top:1px solid #a0a0a0;border-left:1px solid #a0a0a0;border-bottom:1px solid #ffffff;border-right:1px solid #ffffff;"></div>
<div class="t cz" style="left:1033.0px;width:86px;text-align:center;top:406.41px;font-size:10.5px;line-height:10.5px;color:#130f84;font-weight:400;font-style:normal;">118 clocks</div>
<div class="t cz" style="left:840.5px;width:180px;text-align:right;top:424.21px;font-size:10.5px;line-height:10.5px;color:#000;font-weight:400;font-style:normal;">Command Rate (CR)</div>
<div class="r" style="left:1033px;top:421px;width:86px;height:16px;background:#f0f0f0;box-sizing:border-box;border-top:1px solid #a0a0a0;border-left:1px solid #a0a0a0;border-bottom:1px solid #ffffff;border-right:1px solid #ffffff;"></div>
<div class="t cz" style="left:1033.0px;width:86px;text-align:center;top:424.41px;font-size:10.5px;line-height:10.5px;color:#130f84;font-weight:400;font-style:normal;">2T</div>
<div class="t cz" style="left:840.5px;width:180px;text-align:right;top:442.01px;font-size:10.5px;line-height:10.5px;color:#a0a0a0;font-weight:400;font-style:normal;">DRAM Idle Timer</div>
<div class="r" style="left:1033px;top:439px;width:86px;height:16px;background:#f0f0f0;box-sizing:border-box;border-top:1px solid #a0a0a0;border-left:1px solid #a0a0a0;border-bottom:1px solid #ffffff;border-right:1px solid #ffffff;"></div>
<div class="t cz" style="left:840.5px;width:180px;text-align:right;top:459.81px;font-size:10.5px;line-height:10.5px;color:#a0a0a0;font-weight:400;font-style:normal;">Total CAS# (tRDRAM)</div>
<div class="r" style="left:1033px;top:457px;width:86px;height:16px;background:#f0f0f0;box-sizing:border-box;border-top:1px solid #a0a0a0;border-left:1px solid #a0a0a0;border-bottom:1px solid #ffffff;border-right:1px solid #ffffff;"></div>
<div class="t cz" style="left:840.5px;width:180px;text-align:right;top:477.61px;font-size:10.5px;line-height:10.5px;color:#a0a0a0;font-weight:400;font-style:normal;">Row To Column (tRCD)</div>
<div class="r" style="left:1033px;top:474px;width:86px;height:16px;background:#f0f0f0;box-sizing:border-box;border-top:1px solid #a0a0a0;border-left:1px solid #a0a0a0;border-bottom:1px solid #ffffff;border-right:1px solid #ffffff;"></div>
<div class="t" style="left:845px;top:528.99px;font-size:19.5px;line-height:19.5px;color:#a3a3a3;font-weight:700;font-style:italic;letter-spacing:0.3px;">CPU-Z</div>
<div class="t" style="left:917px;top:535.18px;font-size:11.6px;line-height:11.6px;color:#000;font-weight:400;font-style:normal;">Ver. 1.97.0.x64</div>
<div class="r" style="left:1005px;top:527px;width:58px;height:21px;background:#f0f0f0;box-sizing:border-box;border-top:1px solid #fff;border-left:1px solid #fff;border-bottom:2px solid #6a6a6a;border-right:2px solid #6a6a6a;"></div>
<div class="t" style="left:1005.0px;width:58px;text-align:center;top:532.69px;font-size:11.0px;line-height:11.0px;color:#000;font-weight:400;font-style:normal;">Tools</div>
<div class="r" style="left:1062px;top:527px;width:18px;height:21px;background:#f0f0f0;box-sizing:border-box;border-top:1px solid #fff;border-left:1px solid #fff;border-bottom:2px solid #6a6a6a;border-right:2px solid #6a6a6a;"></div>
<svg class="r" style="left:1066px;top:534px" width="10" height="6" viewBox="0 0 10 6"><path d="M1 0H9L5 5Z" fill="#000"/></svg>
<div class="r" style="left:1083px;top:527px;width:75px;height:21px;background:#f0f0f0;box-sizing:border-box;border-top:1px solid #fff;border-left:1px solid #fff;border-bottom:2px solid #6a6a6a;border-right:2px solid #6a6a6a;"></div>
<div class="t" style="left:1083.0px;width:75px;text-align:center;top:532.69px;font-size:11.0px;line-height:11.0px;color:#000;font-weight:400;font-style:normal;">Validate</div>
<div class="r" style="left:1160px;top:527px;width:75px;height:21px;background:#f0f0f0;box-sizing:border-box;border-top:1px solid #fff;border-left:1px solid #fff;border-bottom:2px solid #6a6a6a;border-right:2px solid #6a6a6a;"></div>
<div class="t" style="left:1160.0px;width:75px;text-align:center;top:532.69px;font-size:11.0px;line-height:11.0px;color:#000;font-weight:400;font-style:normal;">Close</div>
</body></html>
